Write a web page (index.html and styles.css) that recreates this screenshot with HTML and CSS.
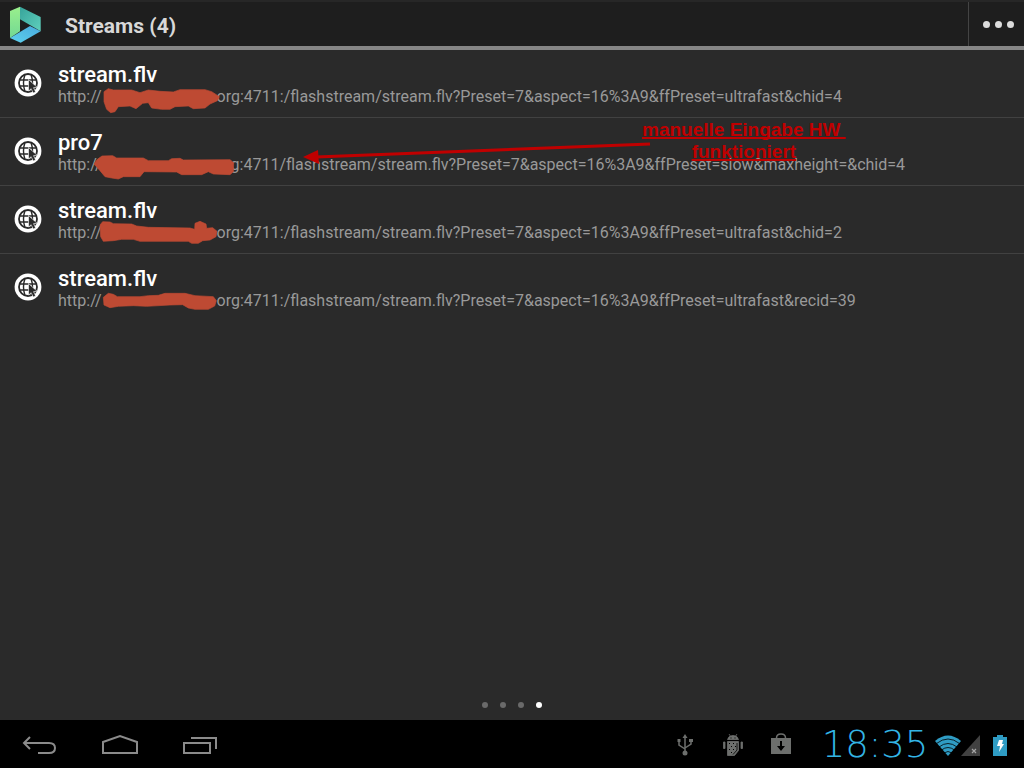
FILE: index.html
```
<!DOCTYPE html>
<html lang="de">
<head>
	<meta charset="UTF-8">
	<meta name="viewport" content="width=device-width, initial-scale=1">
	<title>Streams</title>
	<link rel="stylesheet" href="styles.css">
</head>
<body>

<!-- shared row icon -->
<svg class="defs" aria-hidden="true">
	<symbol id="globe" viewBox="0 0 28 28">
		<circle cx="14" cy="14" r="13.4" fill="#fff"/>
		<circle cx="14" cy="14" r="9" fill="none" stroke="#2a2a2a" stroke-width="1.8"/>
		<path d="M11 5.500q-3 8.500 0 17M17 5.500q3 8.500 0 17M6 11h16M6 17h16" fill="none" stroke="#2a2a2a" stroke-width="1.4"/>
		<path d="M14.500 10.500v11.500l2.700-2.300 2 4.300 2.400-1.100-2-4.200 3.700-.3z" fill="#2a2a2a" stroke="#fff" stroke-width=".6"/>
	</symbol>
</svg>

<header class="topbar">
	<svg class="logo" viewBox="12 12 102 114" aria-hidden="true">
		<defs>
			<linearGradient id="lg" x1="0" y1="0" x2="0" y2="1"><stop offset="0" stop-color="#9af08c"/><stop offset="1" stop-color="#72d894"/></linearGradient>
			<linearGradient id="lt" x1="0" y1="0" x2="1" y2="1"><stop offset="0" stop-color="#37a39a"/><stop offset="1" stop-color="#5fd0bd"/></linearGradient>
			<linearGradient id="lb" x1="0" y1="1" x2="1" y2="0"><stop offset="0" stop-color="#5ed2ee"/><stop offset="1" stop-color="#48a9dd"/></linearGradient>
		</defs>
		<path d="M48 14l62 31v43L48 52z" fill="url(#lt)"/>
		<path d="M18 27l30-13v74l-30 20z" fill="url(#lg)"/>
		<path d="M18 108l60-36 32 16-60 34z" fill="url(#lb)"/>
	</svg>
	<h1>Streams (4)</h1>
	<button class="more" type="button" aria-label="Mehr"><i></i><i></i><i></i></button>
</header>

<main>
	<ul class="streams">
		<li>
			<svg class="globe" aria-hidden="true"><use href="#globe"/></svg>
			<div class="entry">
				<h2>stream.flv</h2>
				<p>http://<span class="redacted"><svg viewBox="39 12 426 90" aria-hidden="true"><path d="M72 35L85 26 100 30H155L180 38 205 30 240 34 280 36 300 29H375L395 35 418 50 412 62 390 72 375 84 340 86 325 78 285 80 270 88H245L215 84 205 68 188 70 168 86 150 78 115 80 105 95 92 98 80 88 72 65z"/></svg></span>org:4711:/flashstream/stream.flv?Preset=7&amp;aspect=16%3A9&amp;ffPreset=ultrafast&amp;chid=4</p>
			</div>
		</li>
		<li>
			<svg class="globe" aria-hidden="true"><use href="#globe"/></svg>
			<div class="entry">
				<h2>pro7</h2>
				<p>http://<span class="redacted wide"><svg viewBox="39 216 426 90" aria-hidden="true"><path d="M42 252L52 238 66 228 98 227 110 234H190L205 242H265L275 236 300 235 310 240 450 239 461 248 460 275 450 284 400 282 385 275 365 284H305L290 276 192 275 180 290H130L115 297 95 294 75 290 60 272z"/></svg></span>g:4711/flashstream/stream.flv?Preset=7&amp;aspect=16%3A9&amp;ffPreset=slow&amp;maxheight=&amp;chid=4</p>
			</div>
			<!-- hand-made remark on this entry -->
			<svg class="arrow" viewBox="0 0 350 20" aria-hidden="true">
				<path d="M14 12L348 -1" stroke="#c00000" stroke-width="3"/>
				<path d="M1 12L16 5l1 14z" fill="#c00000"/>
			</svg>
			<div class="remark">manuelle Eingabe HW&nbsp;<br>funktioniert</div>
		</li>
		<li>
			<svg class="globe" aria-hidden="true"><use href="#globe"/></svg>
			<div class="entry">
				<h2>stream.flv</h2>
				<p>http://<span class="redacted"><svg viewBox="39 90 426 90" aria-hidden="true"><path d="M60 105L68 95 90 96 100 101 155 102 170 108 205 112 330 114 344 118 345 100 360 94 378 102 380 115 398 113 411 124 408 140 390 150 368 152 355 160H335L325 154H180L160 148H125L100 152 70 154 62 140z"/></svg></span>org:4711:/flashstream/stream.flv?Preset=7&amp;aspect=16%3A9&amp;ffPreset=ultrafast&amp;chid=2</p>
			</div>
		</li>
		<li>
			<svg class="globe" aria-hidden="true"><use href="#globe"/></svg>
			<div class="entry">
				<h2>stream.flv</h2>
				<p>http://<span class="redacted"><svg viewBox="39 294 426 90" aria-hidden="true"><path d="M70 322L85 310 100 313 112 320H180L205 317 235 316 255 310H315L345 317 400 320 409 332 404 348 385 358H345L325 354 308 344 270 345 200 349 160 347 115 349 90 353 72 345z"/></svg></span>org:4711:/flashstream/stream.flv?Preset=7&amp;aspect=16%3A9&amp;ffPreset=ultrafast&amp;recid=39</p>
			</div>
		</li>
	</ul>
	<div class="pages"><i></i><i></i><i></i><i class="on"></i></div>
</main>

<footer class="sysbar">
	<nav>
		<button type="button" aria-label="Zur&uuml;ck"><svg viewBox="0 0 36 24"><path d="M8 3L2 9l6 6M2 9h25q6 0 6 5t-6 5H16"/></svg></button>
		<button type="button" aria-label="Start"><svg viewBox="0 0 36 24"><path d="M1 19V8L18 2l17 6v11z"/></svg></button>
		<button type="button" aria-label="Letzte Apps"><svg viewBox="0 0 36 24"><path d="M2 9h26v10H2zM9 4h25v11"/></svg></button>
	</nav>
	<div class="status">
		<svg class="note" viewBox="0 0 24 24">
			<path d="M12 3v17M6 8v4l6 4M18 8v3l-6 4" fill="none" stroke="#6d6f6d" stroke-width="1.5"/>
			<path d="M12 1l2.500 4h-5zM4.500 6h3v3h-3zM16 6h4v3h-4z" fill="#6d6f6d"/>
			<circle cx="12" cy="20" r="2.500" fill="#6d6f6d"/>
		</svg>
		<svg class="note" viewBox="0 0 24 24">
			<path d="M6.500 6.500q1-4 5.500-4t5.500 4zM8 1l2 3M16 1l-2 3M6.500 8.500h11v9l-4 5h-7zM2.500 9h1.500v6.500H2.500zM20 9h1.500v6.500H20z" fill="#6d6f6d" stroke="#6d6f6d" stroke-width=".8"/>
			<path d="M8 10.500h1m3 0h1m-3 3h1m3 0h1m-7 3h1m3 0h1m-3 3h1M9.500 5h1m3 0h1" stroke="#000" stroke-width="1.200"/>
			<path d="M16 10v7l-4 4.500" fill="none" stroke="#000" stroke-width=".8"/>
		</svg>
		<svg class="note" viewBox="0 0 24 24">
			<path d="M2 5h20v16H2z" fill="#6d6f6d"/>
			<path d="M7.500 5q0-4 4.500-4t4.500 4" fill="none" stroke="#6d6f6d" stroke-width="1.500"/>
			<path d="M11 8h2v5h3l-4 5-4-5h3z" fill="#000"/>
		</svg>
		<time class="clock">18:35</time>
		<svg class="wifi" viewBox="0 0 26 21">
			<path d="M0 6q13-11 26 0L13 21z" fill="#2f9cc4"/>
			<path d="M1.500 8.500q11.500-9 23 0M4 12q9-7 18 0M6.500 15q6.500-5 13 0M9 18q4-3 8 0" fill="none" stroke="#000" stroke-width=".8"/>
		</svg>
		<svg class="signal" viewBox="0 0 20 21">
			<path d="M19 0v21H0z" fill="#414141"/>
			<path d="M11 14l4 4m0-4l-4 4" stroke="#a5a5a5" stroke-width="1.200"/>
		</svg>
		<svg class="battery" viewBox="0 0 14 21">
			<path d="M4 0h6v2h4v19H0V2h4z" fill="#2f9cc4"/>
			<path d="M6 5h4l-1 4h2l-5 8 1-6H4z" fill="#fff"/>
		</svg>
	</div>
</footer>

</body>
</html>
```
FILE: styles.css
```
* { box-sizing: border-box; }
body {
	margin: 0;
	min-height: 100vh;
	display: flex;
	flex-direction: column;
	background-color: #2a2a2a;
	color: #fff;
	font-family: Roboto, sans-serif;
}
h1, h2, p, ul { margin: 0; padding: 0; }
button { border: 0; padding: 0; background: none; cursor: pointer; }
svg { display: block; }
.defs { position: absolute; width: 0; height: 0; }

/* title bar */
.topbar {
	display: flex;
	align-items: center;
	height: 50px;
	padding-left: 8px;
	background-color: #1e1e1e;
	border-top: 2px solid #272727;
	border-bottom: 4px solid #868686;
}
.logo { width: 34px; height: 38px; margin-top: 2px; }
.topbar h1 {
	margin-left: 23px;
	padding-top: 4px;
	font-size: 21px;
	line-height: 28px;
	color: #d8d8d8;
}
.more {
	display: flex;
	align-items: center;
	justify-content: center;
	gap: 5px;
	align-self: stretch;
	width: 56px;
	margin-left: auto;
	padding-left: 4px;
	border-left: 1px solid #444;
}
.more i { width: 7px; height: 7px; border-radius: 50%; background-color: #dcdcdc; }

/* stream list */
main { flex: 1; display: flex; flex-direction: column; }
.streams { list-style: none; }
.streams li {
	position: relative;
	display: flex;
	align-items: flex-start;
	height: 68px;
	padding: 13px 0 0 14px;
	border-bottom: 1px solid #414141;
}
.streams li:last-child { border-bottom: 0; }
.globe { width: 28px; height: 28px; margin-top: 6px; }
.entry { margin-left: 16px; }
.entry h2 { font-size: 22px; line-height: 24px; font-weight: 500; }
.entry p { font-size: 16px; line-height: 20px; color: #999; white-space: nowrap; }
.redacted { position: relative; display: inline-block; width: 115px; }
.redacted.wide { width: 129px; }
.redacted svg {
	position: absolute;
	left: -9px;
	bottom: -12px;
	width: 142px;
	height: 30px;
	fill: #be4a33;
	stroke: #be4a33;
	stroke-width: 2;
	stroke-linejoin: round;
}
.arrow { position: absolute; left: 302px; top: 27px; width: 350px; height: 20px; overflow: visible; }
.remark {
	position: absolute;
	left: 642px;
	top: 1px;
	font: bold 19px/22px "Liberation Sans", sans-serif;
	color: #c00000;
	text-align: center;
	text-decoration: underline;
	text-decoration-thickness: 2px;
	text-decoration-skip-ink: none;
	white-space: nowrap;
}
.pages { display: flex; justify-content: center; gap: 12px; margin-top: auto; padding-bottom: 12px; }
.pages i { width: 6px; height: 6px; border-radius: 50%; background-color: #6a6a6a; }
.pages .on { background-color: #fff; }

/* system bar */
.sysbar {
	display: flex;
	align-items: center;
	justify-content: space-between;
	height: 48px;
	padding: 2px 17px 0 22px;
	background-color: #000;
}
.sysbar nav { display: flex; gap: 44px; padding-top: 1px; }
.sysbar nav svg { width: 36px; height: 24px; fill: none; stroke: #8b8b8b; stroke-width: 2; }
.status { display: flex; align-items: center; }
.note { width: 24px; height: 24px; margin-right: 24px; }
.clock {
	min-width: 116px;
	font: 200 37px/46px "DejaVu Sans", sans-serif;
	text-align: center;
	color: #33b5e5;
}
.wifi { width: 26px; height: 21px; margin-left: 2px; }
.signal { width: 20px; height: 21px; }
.battery { width: 14px; height: 21px; margin-left: 12px; }
```
